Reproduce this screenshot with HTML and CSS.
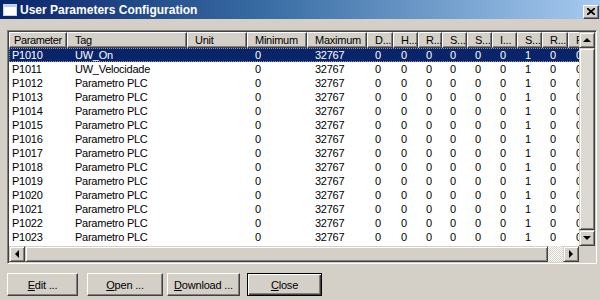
FILE: index.html
```html
<!DOCTYPE html>
<html lang="en">
<head>
    <meta charset="UTF-8">
    <title>User Parameters Configuration</title>
    <link rel="stylesheet" href="styles.css">
</head>
<body>
    <div class="window">
        <div class="titlebar">
            <svg class="app-icon" width="14" height="12" viewBox="0 0 14 12">
                <rect x="0.5" y="0.5" width="13" height="11" fill="#fff" stroke="#c8d4e8"/>
                <rect x="1" y="1" width="12" height="2" fill="#b8d0f0"/>
            </svg>
            <span class="title">User Parameters Configuration</span>
            <div class="title-close">
                <svg width="8" height="7" viewBox="0 0 8 7">
                    <path d="M0 0 L8 7 M8 0 L0 7" stroke="#000" stroke-width="1.8"/>
                </svg>
            </div>
        </div>

        <div class="content">
            <div class="listview">
                <div class="list-area">
                    <table class="grid">
                        <colgroup>
                            <col style="width:58px"><col style="width:120px"><col style="width:60px">
                            <col style="width:60px"><col style="width:60px"><col style="width:26px">
                            <col style="width:25px"><col style="width:24px"><col style="width:25px">
                            <col style="width:25px"><col style="width:25px"><col style="width:25px">
                            <col style="width:26px"><col style="width:30px">
                        </colgroup>
                        <thead>
                            <tr>
                                <th>Parameter</th><th>Tag</th><th>Unit</th><th>Minimum</th><th>Maximum</th>
                                <th>D...</th><th>H...</th><th>R...</th><th>S...</th><th>S...</th>
                                <th>I...</th><th>S...</th><th>R...</th><th>F...</th>
                            </tr>
                        </thead>
                        <tbody id="rows"></tbody>
                    </table>
                </div>

                <div class="vscroll">
                    <div class="sb-btn"><span class="tri up"></span></div>
                    <div class="sb-thumb"></div>
                    <div class="sb-btn"><span class="tri down"></span></div>
                </div>

                <div class="hscroll">
                    <div class="sb-btn"><span class="tri left"></span></div>
                    <div class="sb-thumb h"></div>
                    <div class="sb-track"></div>
                    <div class="sb-btn"><span class="tri right"></span></div>
                </div>

                <div class="corner"></div>
            </div>

            <div class="buttons">
                <button class="btn btn-edit"><u>E</u>dit ...</button>
                <button class="btn btn-open"><u>O</u>pen ...</button>
                <button class="btn btn-download"><u>D</u>ownload ...</button>
                <button class="btn btn-close default"><u>C</u>lose</button>
            </div>
        </div>
    </div>

    <script>
        const tags = ['UW_On', 'UW_Velocidade'];
        const body = document.getElementById('rows');

        for (let i = 0; i < 14; i++) {
            const tr = document.createElement('tr');
            if (i === 0) tr.className = 'selected';
            const cells = [
                'P' + (1010 + i),
                tags[i] || 'Parametro PLC',
                '', '0', '32767',
                '0', '0', '0', '0', '0', '0', '1', '0', '0'
            ];
            cells.forEach(text => {
                const td = document.createElement('td');
                td.textContent = text;
                tr.appendChild(td);
            });
            body.appendChild(tr);
        }
    </script>
</body>
</html>
```

FILE: styles.css
```css
body {
    margin: 0;
    width: 600px;
    height: 300px;
    overflow: hidden;
    background-color: #d4d0c8;
    font-family: "Liberation Sans", Arial, sans-serif;
}

.window {
    display: flex;
    flex-direction: column;
    height: 300px;
}

/* title bar */

.titlebar {
    display: flex;
    align-items: center;
    height: 19px;
    padding-left: 3px;
    background: linear-gradient(to right, #0a246a 0%, #3a6ea5 45%, #a6caf0 100%);
}

.app-icon {
    margin-right: 3px;
}

.title {
    flex: 1;
    color: #fff;
    font-size: 12px;
    font-weight: bold;
}

.title-close {
    display: flex;
    align-items: center;
    justify-content: center;
    box-sizing: border-box;
    width: 16px;
    height: 14px;
    margin-right: 1px;
    margin-top: 4px;
    background-color: #d4d0c8;
    border: 1px solid;
    border-color: #fff #404040 #404040 #fff;
    box-shadow: inset -1px -1px #808080;
}

/* list view */

.content {
    padding: 11px 3px 0 7px;
}

.listview {
    display: grid;
    grid-template-columns: 1fr 16px;
    grid-template-rows: 1fr 16px;
    height: 234px;
    box-sizing: border-box;
    border: 1px solid;
    border-color: #808080 #fff #fff #808080;
    box-shadow: inset 1px 1px #404040, inset -1px -1px #d4d0c8;
    padding: 1px;
    background-color: #fff;
}

.list-area {
    overflow: hidden;
    background-color: #fff;
}

.grid {
    table-layout: fixed;
    width: 589px;
    border-collapse: separate;
    border-spacing: 0;
    font-size: 11px;
    letter-spacing: -0.25px;
    color: #000;
}

.grid th {
    height: 14px;
    line-height: 14px;
    padding: 0 0 0 7px;
    font-weight: normal;
    text-align: left;
    white-space: nowrap;
    overflow: hidden;
    background-color: #d4d0c8;
    border: 1px solid;
    border-color: #fff #404040 #404040 #fff;
    box-shadow: inset -1px -1px #808080;
}

.grid th:first-child {
    padding-left: 4px;
    letter-spacing: -0.4px;
}

.grid td {
    height: 14px;
    line-height: 14px;
    padding: 0 0 0 8px;
    white-space: nowrap;
    overflow: hidden;
}

.grid td:first-child {
    padding-left: 3px;
}

.grid tr.selected td {
    background-color: #0a246a;
    color: #fff;
}

.grid tr.selected {
    outline: 1px dotted #8c96bc;
    outline-offset: -1px;
}

/* scroll bars */

.vscroll,
.hscroll {
    display: flex;
    background-color: #d4d0c8;
}

.vscroll {
    flex-direction: column;
    grid-row: 1;
    grid-column: 2;
}

.hscroll {
    grid-row: 2;
    grid-column: 1;
}

.corner {
    background-color: #d4d0c8;
}

.sb-btn {
    display: flex;
    align-items: center;
    justify-content: center;
    flex: 0 0 16px;
    height: 16px;
    box-sizing: border-box;
    background-color: #d4d0c8;
    border: 1px solid;
    border-color: #d4d0c8 #404040 #404040 #d4d0c8;
    box-shadow: inset 1px 1px #fff, inset -1px -1px #808080;
}

.sb-thumb {
    flex: 1;
    box-sizing: border-box;
    background-color: #dcd9d2;
    border: 1px solid;
    border-color: #d4d0c8 #404040 #404040 #d4d0c8;
    box-shadow: inset 1px 1px #fff, inset -1px -1px #808080;
}

.sb-thumb.h {
    flex: 0 0 523px;
    background-color: #d4d0c8;
}

.sb-track {
    flex: 1;
    background: repeating-conic-gradient(#fff 0 25%, #d4d0c8 0 50%) 0 0 / 2px 2px;
}

.tri {
    width: 0;
    height: 0;
    border-style: solid;
    border-color: transparent;
}

.tri.up {
    border-width: 0 4px 4px 4px;
    border-bottom-color: #000;
}

.tri.down {
    border-width: 4px 4px 0 4px;
    border-top-color: #000;
}

.tri.left {
    border-width: 4px 4px 4px 0;
    border-right-color: #000;
}

.tri.right {
    border-width: 4px 0 4px 4px;
    border-left-color: #000;
}

/* dialog buttons */

.buttons {
    display: flex;
    margin-top: 9px;
}

.btn {
    height: 23px;
    box-sizing: border-box;
    padding: 0;
    font-family: "Liberation Sans", Arial, sans-serif;
    font-size: 11px;
    letter-spacing: -0.2px;
    color: #000;
    background-color: #d4d0c8;
    border: 1px solid;
    border-color: #fff #404040 #404040 #fff;
    box-shadow: inset -1px -1px #808080;
}

.btn-edit {
    width: 71px;
}

.btn-open {
    width: 76px;
    margin-left: 9px;
}

.btn-download {
    width: 73px;
    margin-left: 4px;
}

.btn-close {
    width: 75px;
    margin-left: 7px;
}

.btn.default {
    border-color: #000;
    box-shadow: inset 1px 1px #fff, inset -1px -1px #404040, inset -2px -2px #808080;
}
```
